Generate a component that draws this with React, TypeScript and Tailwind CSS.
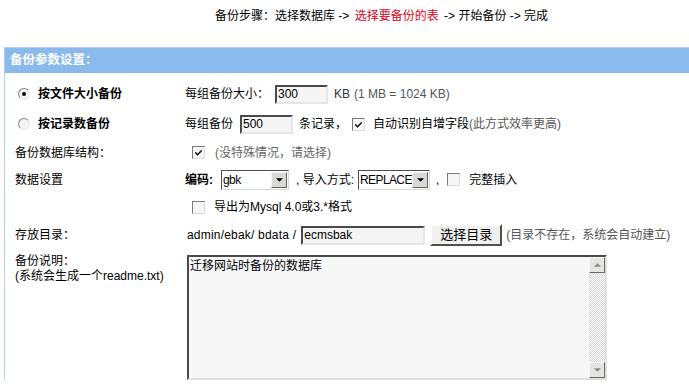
import React from "react";

const font = "font-['Liberation_Sans','Noto_Sans_CJK_SC',sans-serif]";

const Radio = ({ checked }: { checked?: boolean }) => (
  <span className="relative inline-block w-[12px] h-[12px] rounded-full border border-t-[#808080] border-l-[#808080] border-b-[#e8e8e8] border-r-[#e8e8e8] bg-[#f4f4f4] mr-[8px] shrink-0">
    {checked && <span className="absolute left-[3px] top-[3px] w-[4px] h-[4px] rounded-full bg-black" />}
  </span>
);

const Checkbox = ({ checked }: { checked?: boolean }) => (
  <span className="relative inline-block w-[13px] h-[13px] border border-t-[#7a7a7a] border-l-[#7a7a7a] border-b-[#dcdcdc] border-r-[#dcdcdc] bg-[#f6f6f6] shrink-0">
    {checked && (
      <svg viewBox="0 0 11 11" className="absolute left-0 top-0 w-[11px] h-[11px]">
        <path d="M2.5 5 L4.5 7 L8.5 3 L8.5 4.5 L4.5 8.5 L2.5 6.5 Z" fill="#111" stroke="#111" strokeWidth="0.6" />
      </svg>
    )}
  </span>
);

const TextBox = ({ value, w }: { value: string; w: string }) => (
  <span className={`inline-flex items-center h-[19px] ${w} border-2 border-t-[#4a4a4a] border-l-[#4a4a4a] border-b-[#e6e6e6] border-r-[#e6e6e6] bg-[#f5f5f5] pl-[1px] text-[12px] leading-none`}>
    {value}
  </span>
);

const DownBtn = () => (
  <span className="flex items-center justify-center w-[16px] h-[16px] shrink-0 bg-[#d8d8d4] border border-t-[#f4f4f4] border-l-[#f4f4f4] border-b-[#606060] border-r-[#606060]">
    <svg viewBox="0 0 8 4" className="w-[7px] h-[4px]">
      <path d="M0 0 L8 0 L4 4 Z" fill="#000" />
    </svg>
  </span>
);

const Select = ({ value, w }: { value: string; w: string }) => (
  <span className={`inline-flex items-center justify-between h-[20px] ${w} border border-t-[#505050] border-l-[#505050] border-b-[#d8d8d8] border-r-[#d8d8d8] bg-white pl-[1px] pr-[1px] text-[12px] leading-none tracking-[-0.6px]`}>
    {value}
    <DownBtn />
  </span>
);

const Row = ({ h, left, children }: { h: string; left: React.ReactNode; children: React.ReactNode }) => (
  <div className={`flex items-center ${h}`}>
    <div className="w-[180px] shrink-0 flex items-center pl-[10px]">{left}</div>
    <div className="flex items-center">{children}</div>
  </div>
);

export default function App() {
  return (
    <div className={`w-[689px] h-[385px] overflow-hidden bg-white text-black text-[12px] ${font}`}>
      <div className="h-[31px] pl-[215px] flex items-center whitespace-pre">
        备份步骤：选择数据库 -&gt; <span className="text-[#e0001a] mx-[2px]">选择要备份的表</span> -&gt; 开始备份 -&gt; 完成
      </div>

      <div className="mt-[16px] ml-[4px] w-[720px] border-l border-t border-[#aecdf0]">
        <div className="h-[25px] bg-[#8ab9ec] flex items-center pl-[5px] text-white font-bold text-[12.5px]">
          备份参数设置：
        </div>

        <div className="pt-[6px]">
          <Row
            h="h-[30px]"
            left={
              <span className="flex items-center pl-[3px] font-bold">
                <Radio checked />
                按文件大小备份
              </span>
            }
          >
            <span className="mr-[6px]">每组备份大小：</span>
            <TextBox value="300" w="w-[53px]" />
            <span className="ml-[6px] text-[#333]">KB</span>
            <span className="ml-[4px] text-[#555]">(1 MB = 1024 KB)</span>
          </Row>

          <Row
            h="h-[30px]"
            left={
              <span className="flex items-center pl-[3px] font-bold">
                <Radio />
                按记录数备份
              </span>
            }
          >
            <span className="mr-[7px]">每组备份</span>
            <TextBox value="500" w="w-[53px]" />
            <span className="ml-[6px]">条记录，</span>
            <span className="ml-[5px] mr-[8px] flex"><Checkbox checked /></span>
            <span>自动识别自增字段</span>
            <span className="text-[#555]">(此方式效率更高)</span>
          </Row>

          <Row h="h-[27px]" left={<span>备份数据库结构：</span>}>
            <span className="ml-[7px] mr-[10px] flex"><Checkbox checked /></span>
            <span className="text-[#666]">(没特殊情况，请选择)</span>
          </Row>

          <Row h="h-[27px]" left={<span>数据设置</span>}>
            <span className="font-bold mr-[8px]">编码:</span>
            <Select value="gbk" w="w-[68px]" />
            <span className="ml-[7px] mr-[4px]">, 导入方式:</span>
            <Select value="REPLACE" w="w-[72px]" />
            <span className="ml-[6px]">,</span>
            <span className="ml-[8px] mr-[9px] flex"><Checkbox /></span>
            <span>完整插入</span>
          </Row>

          <Row h="h-[28px]" left={<span />}>
            <span className="ml-[7px] mr-[9px] flex"><Checkbox /></span>
            <span>导出为Mysql 4.0或3.*格式</span>
          </Row>

          <Row h="h-[28px]" left={<span>存放目录：</span>}>
            <span className="ml-[2px] mr-[5px] tracking-[0.2px]">admin/ebak/ bdata /</span>
            <TextBox value="ecmsbak" w="w-[124px]" />
            <span className="ml-[5px] flex items-center justify-center w-[72px] h-[22px] bg-[#f0f0ee] border-2 border-t-[#ffffff] border-l-[#ffffff] border-b-[#505050] border-r-[#505050] text-[13px]">
              选择目录
            </span>
            <span className="ml-[4px] text-[#555]">(目录不存在，系统会自动建立)</span>
          </Row>

          <div className="flex">
            <div className="w-[180px] shrink-0 pl-[10px] pt-[5px] leading-[15px]">
              备份说明：
              <br />
              (系统会生成一个readme.txt)
            </div>
            <div className="mt-[6px] ml-[2px] w-[420px] h-[125px] flex border-2 border-t-[#4a4a4a] border-l-[#4a4a4a] border-b-[#e0e0e0] border-r-[#e0e0e0] bg-[#f7f7f7]">
              <div className="flex-1 pl-[1px] pt-[2px] leading-[15px]">迁移网站时备份的数据库</div>
              <div className="w-[16px] flex flex-col bg-[repeating-conic-gradient(#d8d8d8_0_25%,#fafafa_0_50%)] bg-[length:2px_2px]">
                <span className="flex items-center justify-center w-[16px] h-[16px] bg-[#e4e4e0] border border-t-[#fafafa] border-l-[#fafafa] border-b-[#6a6a6a] border-r-[#6a6a6a]">
                  <svg viewBox="0 0 8 4" className="w-[7px] h-[4px]">
                    <path d="M0 4 L8 4 L4 0 Z" fill="#8a8a8a" />
                  </svg>
                </span>
                <span className="flex-1" />
                <span className="flex items-center justify-center w-[16px] h-[16px] bg-[#e4e4e0] border border-t-[#fafafa] border-l-[#fafafa] border-b-[#6a6a6a] border-r-[#6a6a6a]">
                  <svg viewBox="0 0 8 4" className="w-[7px] h-[4px]">
                    <path d="M0 0 L8 0 L4 4 Z" fill="#8a8a8a" />
                  </svg>
                </span>
              </div>
            </div>
          </div>
        </div>
      </div>
    </div>
  );
}
